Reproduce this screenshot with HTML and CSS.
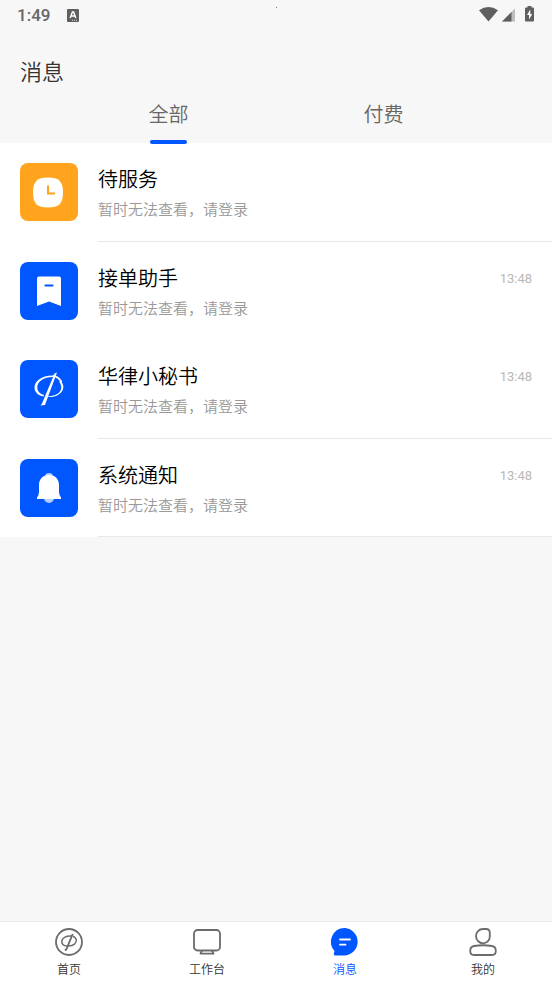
FILE: index.html
```html
<!DOCTYPE html>
<html lang="zh-CN">
<head>
<meta charset="utf-8">
<meta name="viewport" content="width=device-width, initial-scale=1">
<title>消息</title>
<link rel="stylesheet" href="styles.css">
</head>
<body>
<div class="status">
  <span class="clock">1:49</span>
  <svg class="badge" viewBox="0 0 12 13"><rect width="12" height="13" rx="1" fill="#5f5f5f"/><path d="M3.2 9 5.4 3h1.2L8.8 9M4.2 7h3.6" fill="none" stroke="#fff" stroke-width="1.4"/><path d="M5 11.3h1m1 0h1m1 0h1" stroke="#ddd"/></svg>
  <svg class="camera" viewBox="0 0 2 2"><rect width="1" height="1" fill="#777"/></svg>
  <svg class="signals" viewBox="0 0 56 18">
    <path d="M0 4.2Q9.500-2.400 19 4.200L9.500 15.500Z" fill="#5f5f5f"/>
    <path d="M23 15.500 36 2.500V15.500Z" fill="#bdbdbd"/>
    <path d="M23 15.500 32.500 6V15.500Z" fill="#5f5f5f"/>
    <path d="M48.500 0h4v1.500H54q1 0 1 1v12q0 1-1 1h-7q-1 0-1-1v-12q0-1 1-1h1.500Z" fill="#5f5f5f"/>
    <path d="M51.300 3.500 48 9h2v4.500L53.200 8h-1.900Z" fill="#fff"/>
  </svg>
</div>
<header class="header">
  <h1>消息</h1>
  <div class="tabs" role="tablist">
    <button class="tab active" role="tab" aria-selected="true">全部</button>
    <button class="tab" role="tab" aria-selected="false">付费</button>
  </div>
</header>
<main>
  <ul class="list">
    <li class="row">
      <svg class="icon" viewBox="0 0 58 58"><rect width="58" height="58" rx="8" fill="#ffa41c"/><path d="M28 14.500C39 14.500 43 18.500 43 29.500S39 44.500 28 44.500 13 40.500 13 29.500 17 14.500 28 14.500Z" fill="#fff"/><path d="M28 22.500v8h7" fill="none" stroke="#ffa41c" stroke-width="2"/></svg>
      <div class="body line"><div class="text"><h2>待服务</h2><p>暂时无法查看，请登录</p></div></div>
    </li>
    <li class="row">
      <svg class="icon" viewBox="0 0 58 58"><rect width="58" height="58" rx="8" fill="#0057ff"/><path d="M19 14.500H39Q41 14.500 41 16.500V44L29 39.500 17 44V16.500Q17 14.500 19 14.500Z" fill="#fff"/><path d="M25.500 23.500h7" stroke="#0057ff" stroke-width="2.200" stroke-linecap="round"/></svg>
      <div class="body"><div class="text"><h2>接单助手</h2><p>暂时无法查看，请登录</p></div><time>13:48</time></div>
    </li>
    <li class="row">
      <svg class="icon" viewBox="0 0 58 58"><rect width="58" height="58" rx="8" fill="#0057ff"/><path fill-rule="evenodd" d="M41 21.500C45 25.500 44 32 37.500 35.200 34 37 30.500 37.500 26.500 36.500 31 36.500 34.500 35.700 37.500 33.800 42 31 42.500 26 39 21.500ZM33.500 15.500C22 15 14.500 21 14.500 27.500 14.500 32 18 35.500 23.500 36.500L24 35C19.500 34 17.300 31 17.300 27.300 17.300 21.500 23.500 17 33 17Z" fill="#fff"/><path d="M33 15.700Q38.500 17 41.500 22" fill="none" stroke="#fff" stroke-width="1.800"/><path d="M34.500 13.500 37 12.500 25.500 43.500 25 45 20.500 45.500 22 43.500Z" fill="#fff"/></svg>
      <div class="body line"><div class="text"><h2>华律小秘书</h2><p>暂时无法查看，请登录</p></div><time>13:48</time></div>
    </li>
    <li class="row">
      <svg class="icon" viewBox="0 0 58 58"><rect width="58" height="58" rx="8" fill="#0057ff"/><circle cx="29" cy="18" r="4" fill="#b3cdff"/><path d="M24 39h10a5 5 0 0 1-10 0Z" fill="#b3cdff"/><path d="M29 16C35 16 39 20 39 26V33Q39 36 41 38.500V40H17V38.500Q19 36 19 33V26C19 20 23 16 29 16Z" fill="#fff"/></svg>
      <div class="body line"><div class="text"><h2>系统通知</h2><p>暂时无法查看，请登录</p></div><time>13:48</time></div>
    </li>
  </ul>
</main>
<nav class="nav">
  <a href="#home"><svg viewBox="0 0 28 28" fill="none" stroke="#6b6b6b"><circle cx="14" cy="14" r="13" stroke-width="1.800"/><path d="M16.500 8C11 7.500 6.800 10.200 6.800 13.500 6.800 16 9 17.800 12 18M18 8.200C22 9.800 22.200 14 19.500 16.200 17.500 17.800 15 18.200 12.500 18" stroke-width="1.500"/><path d="M17.700 6 11.500 21 10 22.500" stroke-width="1.900"/></svg><span>首页</span></a>
  <a href="#work"><svg viewBox="0 0 28 28" fill="none" stroke="#6b6b6b" stroke-width="1.800"><rect x="1" y="2" width="26" height="20.500" rx="3.500"/><path d="M9 22.500 7.500 25.700H20.500L19 22.500" stroke-linejoin="round"/></svg><span>工作台</span></a>
  <a href="#messages" class="current" aria-current="page"><svg viewBox="0 0 28 28"><path d="M14 0A13.800 13.800 0 0 1 14 27.500H4.500Q2 27.500 3 25L3.500 23A13.800 13.800 0 0 1 14 0Z" fill="#0057ff"/><path d="M9 11.500H19M9 16.700H14.500" stroke="#fff" stroke-width="1.800" stroke-linecap="round"/></svg><span>消息</span></a>
  <a href="#me"><svg viewBox="0 0 28 28" fill="none" stroke="#6b6b6b" stroke-width="1.800"><path d="M14 1H17C20 1 20.800 2.500 20.800 5V8.500C20.800 12.500 17.500 15.300 14 15.300S7 12.200 7 8.200 10 1 14 1Z"/><path d="M5 18Q14 16.500 23 18C26 18.500 26.800 20 26.800 23 26.800 26 25.800 27 23 27H5C2.200 27 1.200 26 1.200 23 1.200 20 2 18.500 5 18Z"/></svg><span>我的</span></a>
</nav>
</body>
</html>
```
FILE: styles.css
```css
* { box-sizing: border-box; margin: 0; padding: 0; }
body {
  min-height: 100vh;
  display: flex;
  flex-direction: column;
  background: #f7f7f7;
  color: #000;
  font-family: Roboto, "Noto Sans CJK SC", sans-serif;
  font-weight: 350;
}
svg { display: block; }
.status {
  position: relative;
  display: flex;
  align-items: center;
  height: 30px;
  padding: 0 17px;
}
.clock { font-size: 17px; line-height: 30px; color: #666; font-weight: 500; }
.badge { width: 12px; height: 13px; margin-left: 17px; }
.camera { position: absolute; left: 50%; top: 7px; width: 2px; height: 2px; }
.signals { width: 56px; height: 18px; margin-left: auto; }
.header { padding-top: 27px; }
h1 {
  padding: 0 20px;
  font-size: 22px;
  line-height: 32px;
  font-weight: 350;
  color: #333;
}
.tabs { display: flex; padding: 9px 61px 0; }
.tab {
  position: relative;
  flex: 1;
  height: 45px;
  padding-bottom: 11px;
  border: 0;
  background: none;
  font: inherit;
  font-size: 20px;
  line-height: 34px;
  color: #666;
}
.tab.active::after {
  content: "";
  position: absolute;
  left: 50%;
  bottom: -1px;
  width: 37px;
  height: 4px;
  margin-left: -19px;
  border-radius: 2px;
  background: #0057ff;
}
main { flex: 1; }
.list { list-style: none; background: #fff; }
.row { display: flex; gap: 20px; padding-left: 20px; }
.icon { width: 58px; height: 58px; margin-top: 20px; flex: none; }
.body {
  flex: 1;
  display: flex;
  justify-content: space-between;
  align-items: flex-start;
  padding: 21px 20px 17px 0;
}
.line { border-bottom: 1px solid #e8e8e8; }
.row:last-child .body { padding-bottom: 16px; }
h2 { font-size: 20px; line-height: 32px; font-weight: 350; }
p { font-size: 15px; line-height: 28px; color: #999; }
time { font-size: 13px; line-height: 32px; color: #b8b8b8; font-weight: 400; }
.nav {
  display: flex;
  border-top: 1px solid #e8e8e8;
  padding: 6px 0 4px;
  background: #fff;
}
.nav a {
  flex: 1;
  display: flex;
  flex-direction: column;
  align-items: center;
  gap: 5px;
  font-size: 12px;
  line-height: 18px;
  color: #333;
  text-decoration: none;
}
.nav svg { width: 28px; height: 28px; }
.nav .current { color: #0057ff; }
```
